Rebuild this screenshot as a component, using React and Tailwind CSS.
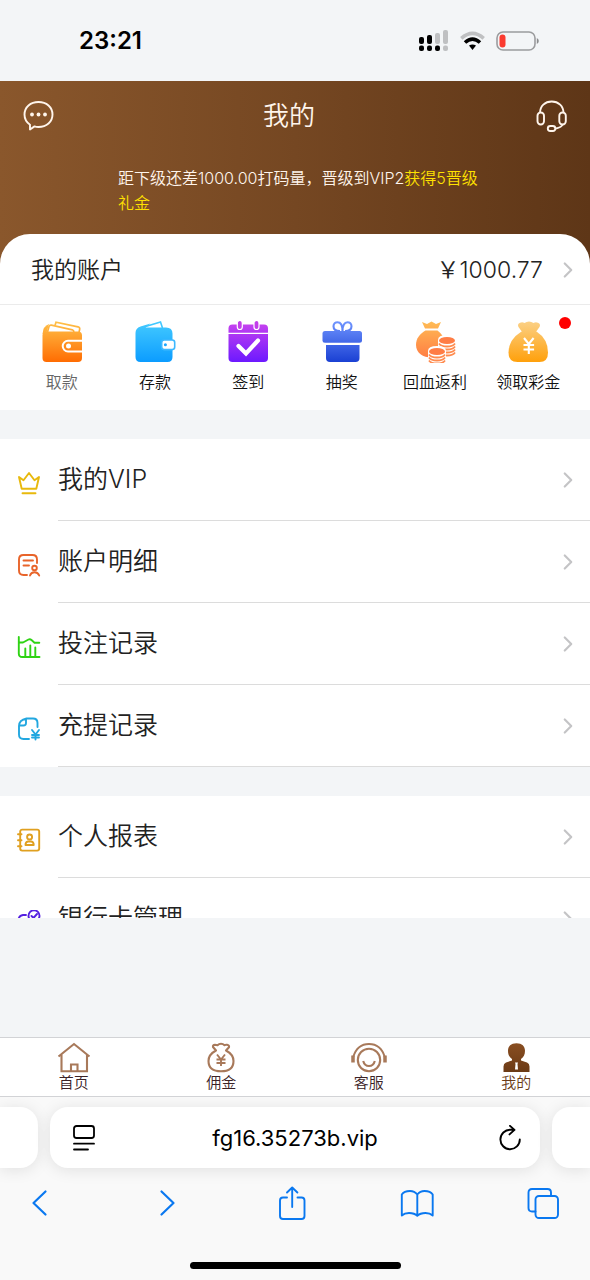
import { ChevronRight } from 'lucide-react'

const shortcuts = [
  { label: '取款', icon: WithdrawIcon, muted: true },
  { label: '存款', icon: DepositIcon },
  { label: '签到', icon: CheckInIcon },
  { label: '抽奖', icon: GiftIcon },
  { label: '回血返利', icon: RebateIcon },
  { label: '领取彩金', icon: BonusIcon, dot: true },
]

const menuGroups = [
  [
    { label: '我的VIP', icon: CrownIcon },
    { label: '账户明细', icon: DetailIcon },
    { label: '投注记录', icon: ChartIcon },
    { label: '充提记录', icon: RecordIcon },
  ],
  [
    { label: '个人报表', icon: ReportIcon },
    { label: '银行卡管理', icon: CardIcon },
  ],
]

const tabs = [
  { label: '首页', icon: HomeIcon },
  { label: '佣金', icon: CommissionIcon },
  { label: '客服', icon: ServiceIcon },
  { label: '我的', icon: MineIcon, active: true },
]

/* ---------- shortcut icons ---------- */

function Fade({ id, from, to }) {
  return (
    <defs>
      <linearGradient id={id} gradientUnits="userSpaceOnUse" x1="0" y1="0" x2="0" y2="42">
        <stop offset="0" stopColor={from} />
        <stop offset="1" stopColor={to} />
      </linearGradient>
    </defs>
  )
}

function WithdrawIcon() {
  return (
    <svg className="size-[42px]" viewBox="0 0 42 42" fill="none" aria-hidden>
      <Fade id="withdraw" from="#ffc24a" to="#ff6a00" />
      <path d="M14 4.5 15 1.2l22 4.6q2 .6 1.7 2.3l-.6 3" stroke="url(#withdraw)" strokeWidth="1.7" />
      <path d="M6.500 11 8 5.500q.6-1.600 2.400-1.300l21 4.600q1.600.5 1.400 2.200" stroke="url(#withdraw)" strokeWidth="1.7" />
      <path d="M1.500 13q.5-8 6.500-10L5.500 12Z" fill="url(#withdraw)" />
      <rect x="1.5" y="10.5" width="39.5" height="30.5" rx="4" fill="url(#withdraw)" />
      <path d="M41 19.8H27a5.3 5.3 0 0 0 0 10.6h14" stroke="#fff" strokeWidth="2" />
      <circle cx="27.5" cy="25.1" r="2.5" fill="#fff" />
    </svg>
  )
}

function DepositIcon() {
  return (
    <svg className="size-[42px]" viewBox="0 0 42 42" fill="none" aria-hidden>
      <Fade id="deposit" from="#45cbff" to="#0a9bff" />
      <path d="M5 7.5 26.5 1l2 6" stroke="url(#deposit)" strokeWidth="1.6" />
      <path d="M1.500 12q0-5 5-6.500l10-3-5 4H32q6.500 0 6.500 6V36q0 5-5 5H6.500q-5 0-5-5Z" fill="url(#deposit)" />
      <rect x="27.7" y="19" width="13" height="9.6" rx="2.500" fill="#fff" stroke="#3db8ff" strokeWidth="1.6" />
      <circle cx="31.4" cy="23.8" r="1.5" fill="#1aa5ff" />
    </svg>
  )
}

function CheckInIcon() {
  return (
    <svg className="size-[42px]" viewBox="0 0 42 42" fill="none" aria-hidden>
      <Fade id="checkin" from="#cc45ee" to="#6a18ff" />
      <rect x="1.5" y="3.5" width="39.5" height="37.5" rx="4" fill="url(#checkin)" />
      <path d="M1 12.4h40" stroke="#fff" strokeWidth="1.2" />
      <rect x="10.3" y="-.5" width="5" height="9" rx="2.5" fill="#c23eea" stroke="#fff" strokeWidth="1.2" />
      <rect x="27" y="-.5" width="5" height="9" rx="2.5" fill="#c23eea" stroke="#fff" strokeWidth="1.2" />
      <path d="m11.5 25 7.5 7.5L31 19.5" stroke="#fff" strokeWidth="4.2" strokeLinecap="round" />
    </svg>
  )
}

function GiftIcon() {
  return (
    <svg className="size-[42px]" viewBox="0 0 42 42" fill="none" aria-hidden>
      <Fade id="gift" from="#7095ff" to="#183ed2" />
      <path d="M19 10c-5 0-6.500-2-6.500-4.800 0-2.400 1.800-4 4-4 3 0 5 3 5 8.800 0-5.800 2-8.800 5-8.800 2.200 0 4 1.600 4 4 0 2.800-1.500 4.800-6.500 4.800" stroke="url(#gift)" strokeWidth="2.1" />
      <rect x="1.5" y="10" width="39.5" height="11.7" rx="2.5" fill="url(#gift)" />
      <path d="M5 24h33.500v13q0 4-4 4H9q-4 0-4-4Z" fill="url(#gift)" />
    </svg>
  )
}

function CoinStack({ x, y, coins }) {
  return (
    <g>
      <path d={`M${x - 1} ${y + 3}q0-5 9-5t9 5v${coins * 3}q0 5-9 5t-9-5Z`} fill="#fff" />
      <ellipse cx={x + 8} cy={y + 3.5} rx="8" ry="3.6" fill="#ff7d45" />
      {Array.from({ length: coins }, (_, i) => (
        <path key={i} d={`M${x} ${y + 6.5 + i * 3}q2 3 8 3t8-3`} stroke="#ff8b4e" strokeWidth="1.8" />
      ))}
    </g>
  )
}

function RebateIcon() {
  return (
    <svg className="size-[42px]" viewBox="0 0 42 42" fill="none" aria-hidden>
      <Fade id="rebate" from="#ffbd55" to="#ff7440" />
      <path d="m8 1 5 2 4.500-2.500L22 3l5-2-3 6.500H11Z" fill="url(#rebate)" />
      <path d="M11.5 9.500h12Q31 15 31 23c0 9-5 13.500-13.500 13.500S2 32 2 24c0-7 4-11 9.500-14.500Z" fill="url(#rebate)" />
      <CoinStack x={25} y={16} coins={4} />
      <CoinStack x={15} y={27} coins={3} />
    </svg>
  )
}

function BonusIcon() {
  return (
    <svg className="size-[42px]" viewBox="0 0 42 42" fill="none" aria-hidden>
      <Fade id="bonus" from="#fbd187" to="#ff9f08" />
      <path
        d="M15.500 11.500 11.500 6Q10 3 13 1.700q2.500-.8 4.500.3Q19.500.5 22 .5t4.500 1.500q2-1.100 4.500-.3 3 1.300 1.500 4.300l-4 5.500Z"
        fill="url(#bonus)"
      />
      <path d="M14.5 10.500h15Q41 18 41 31.500 41 41 32.500 41h-22Q1.500 41 1.500 31.500q0-13 13-21Z" fill="url(#bonus)" />
      <path d="m17 17 4.800 6 4.800-6M21.800 23v10M16.500 24h10.600M16.500 28.500h10.600" stroke="#fff" strokeWidth="2.1" />
    </svg>
  )
}

/* ---------- menu icons ---------- */

function LineIcon({ color, children }) {
  return (
    <svg
      className="size-6 shrink-0"
      viewBox="0 0 24 24"
      fill="none"
      stroke={color}
      strokeWidth="1.9"
      strokeLinecap="round"
      strokeLinejoin="round"
      aria-hidden
    >
      {children}
    </svg>
  )
}

function CrownIcon() {
  return (
    <LineIcon color="#e8b90c">
      <path d="M2 6 6.500 9.300 12 2l5.500 7.300L22 6l-2.700 11.800H4.700ZM5.500 22.200h13" />
    </LineIcon>
  )
}

function DetailIcon() {
  return (
    <LineIcon color="#e8642a">
      <path d="M20 10V6.500Q20 2 15.500 2h-9Q2 2 2 6.500v11Q2 22 6.500 22H10M6.500 7.500h9.500M6.500 12.500h5.500" />
      <circle cx="17.500" cy="15" r="2.300" />
      <path d="M13 22.500q1-3.200 4.500-3.200t4.700 3.200" />
    </LineIcon>
  )
}

function ChartIcon() {
  return (
    <LineIcon color="#2fd314">
      <path d="M1.800 2v16.500Q1.800 22 5.300 22H22.500M2 7.500h4l5.500-3q1.500-.8 3 .5l3 2.700h4.800M8.300 13.500V22M13.300 10.500V22M18.300 12.500V22" />
    </LineIcon>
  )
}

function RecordIcon() {
  return (
    <LineIcon color="#22a7e0">
      <path d="M20.500 10V6Q20.500 1.500 16 1.500H9.500Q2 3 2 9v8.500Q2 22 6.500 22H12M2.500 8.500h4q2.500 0 2.500-2.500V2M15 13l3.500 4.500L22 13M18.500 17.500v5M15 18h7M15 20.500h7" />
    </LineIcon>
  )
}

function ReportIcon() {
  return (
    <LineIcon color="#e0a020">
      <rect x="3.200" y="1.600" width="19" height="21" rx="2" />
      <path d="M1 6.300h3.500M1 12.300h3.500M1 18.300h3.500" />
      <circle cx="12.600" cy="9" r="2.500" />
      <path d="M10.800 13.500h3.600q2.300.5 2.300 3.500H8.500q0-3 2.300-3.500Z" />
    </LineIcon>
  )
}

function CardIcon() {
  return (
    <LineIcon color="#5420e0">
      <circle cx="17" cy="5.800" r="5.500" />
      <path d="m14.500 6 2 2 3.500-4M9 5H6Q2 5.500 1.500 9.500V19q0 3 3 3h14q3 0 3-3v-3" />
    </LineIcon>
  )
}

/* ---------- tab icons ---------- */

function TabSvg({ children }) {
  return (
    <svg className="h-8 w-9" viewBox="0 0 36 32" fill="none" stroke="#a8795a" strokeWidth="2.1" aria-hidden>
      {children}
    </svg>
  )
}

function HomeIcon() {
  return (
    <TabSvg>
      <path d="M2.500 14.500 18 2l15.500 12.500M5.500 12v17.300h25.500V12M15 29v-6.500h6.500V29" />
    </TabSvg>
  )
}

function CommissionIcon() {
  return (
    <TabSvg>
      <path
        d="M13 8.500 10 5q-.5-2 2-2.200 1.500 0 2.500.4 1.500-1.400 3.500-1.400t3.500 1.400q1-.6 2.500-.4 2.500.6 2 2.400l-3 3.300q7.500 4 7.500 10.500 0 10.300-12.500 10.300T5.500 19q0-6.500 7.500-10.500Z"
        strokeLinejoin="round"
      />
      <path d="m14 12.500 4 5 4-5M18 17.500V24M13.500 17.500h9M13.500 21h9" strokeWidth="1.900" />
    </TabSvg>
  )
}

function ServiceIcon() {
  return (
    <TabSvg>
      <circle cx="18" cy="18" r="11.200" />
      <path d="M12.200 19q1.300 5 5.800 5t5.800-5" />
      <path d="M2.200 15C5 6 11 2 18 2s13 4 15.800 13" strokeWidth="1.900" />
      <path d="M2 13.500v7M34 13.500v7" strokeWidth="3.500" />
    </TabSvg>
  )
}

function MineIcon() {
  return (
    <svg className="h-8 w-9" viewBox="0 0 36 32" aria-hidden>
      <Fade id="mine" from="#8a4f22" to="#5f3210" />
      <path
        d="M18.500 1.300c5.500 0 8.500 3 8.500 7.500 0 4-1.500 6.700-4 8.200v1.500l6 2q2.500 1 2.500 4v5.500H5.500v-5.500q0-3 2.500-4l6-2V17c-2.500-1.500-4-4.200-4-8.200 0-4.500 3-7.500 8.500-7.500Z"
        fill="url(#mine)"
      />
      <path d="M17 20.500h3l-.5 1.500.5 5.500h-3l.5-5.500Z" fill="#fff" />
    </svg>
  )
}

/* ---------- sections ---------- */

function StatusBar() {
  return (
    <div className="flex h-[81px] shrink-0 items-center justify-between pr-[51px] pl-[79px] text-black">
      <time className="text-2xl font-semibold">23:21</time>
      <div className="flex items-center gap-[11px]">
        <svg className="h-[22px] w-[31px]" viewBox="0 0 31 22" aria-hidden>
          <g fill="#bfc0c2">
            <rect x="17" y="3" width="5" height="11" rx="2" />
            <rect x="25" y="0" width="5" height="14" rx="2" />
            <rect x="25" y="15.5" width="5" height="5.5" rx="2" />
          </g>
          <rect x="1" y="7" width="5" height="7" rx="2" />
          <rect x="9" y="5" width="5" height="9" rx="2" />
          <rect x="1" y="15.5" width="5" height="5.5" rx="2" />
          <rect x="9" y="15.5" width="5" height="5.5" rx="2" />
          <rect x="17" y="15.5" width="5" height="5.5" rx="2" />
        </svg>
        <svg className="h-5 w-[25px]" viewBox="0 0 25 20" fill="none" strokeWidth="3.6" aria-hidden>
          <path d="M1.300 7.300q11.200-10 22.400 0" stroke="#bfc0c2" />
          <path d="M5 11.500q7.500-6.800 15 0" stroke="#000" />
          <path d="M9 14.500q3.500-2.200 7 0L12.500 19Z" fill="#000" />
        </svg>
        <svg className="h-5 w-[43px]" viewBox="0 0 43 20" aria-hidden>
          <rect x="1" y="1" width="38" height="18" rx="6" fill="none" stroke="#9b9c9e" strokeWidth="1.6" />
          <rect x="3.5" y="3.5" width="6" height="13" rx="3" fill="#fb3b30" />
          <path d="M40.800 7q2 1 2 3t-2 3Z" fill="#8b8c8e" />
        </svg>
      </div>
    </div>
  )
}

function Header() {
  return (
    <header className="text-[#fff5ec]">
      <div className="flex h-[70px] items-center px-[23px]">
        <button type="button" aria-label="消息">
          <svg className="h-8 w-[31px]" viewBox="0 0 31 32" fill="none" stroke="currentColor" strokeWidth="1.9" aria-hidden>
            <path d="M7 24.700Q1.500 21 1.500 14.500C1.500 7 7.500 2 15.500 2s14 5 14 12.500-6 12.500-14 12.500q-2.500 0-4-.6L7 29.500Z" strokeLinejoin="round" />
            <g fill="currentColor" stroke="none">
              <circle cx="9" cy="14.5" r="1.9" />
              <circle cx="15.5" cy="14.5" r="1.9" />
              <circle cx="22" cy="14.5" r="1.9" />
            </g>
          </svg>
        </button>
        <h1 className="flex-1 pr-3 text-center text-[26px]/9 font-[350]">我的</h1>
        <button type="button" aria-label="在线客服">
          <svg className="h-8 w-[31px]" viewBox="0 0 31 32" fill="none" stroke="currentColor" strokeWidth="1.9" aria-hidden>
            <path d="M4 13C4 6 9 1.500 15.700 1.500S27.500 6 27.500 13M27 24q-1.500 3.500-7 4.500" />
            <rect x="1.5" y="12.5" width="6.5" height="12" rx="3.2" />
            <rect x="23.3" y="12.5" width="6.5" height="12" rx="3.2" />
            <rect x="11.8" y="26" width="7.5" height="5" rx="2.5" />
          </svg>
        </button>
      </div>
      <p className="mt-[15px] mb-[18px] pr-[102px] pl-[118px] text-base/[25px] font-[350]">
        距下级还差1000.00打码量，晋级到VIP2
        <span className="text-[#ffe100]">获得5晋级礼金</span>
      </p>
    </header>
  )
}

function AccountCard() {
  return (
    <section className="rounded-t-[30px] bg-white">
      <a href="#account" className="flex h-[71px] items-center border-b border-[#ebebeb] pt-0.5 pr-[9px] pl-[31px] text-[23px] font-[350] text-[#222]">
        <span className="flex-1">我的账户</span>
        <span>￥1000.77</span>
        <ChevronRight className="ml-3 size-[26px] text-[#c4c4c6]" aria-hidden />
      </a>
      <div className="grid h-[105px] grid-cols-6 px-[15px] pt-4">
        {shortcuts.map(({ label, icon: Icon, muted, dot }) => (
          <button key={label} type="button" className="relative flex flex-col items-center gap-[7px]">
            <Icon />
            <span
              className={`text-base/6 font-[350] whitespace-nowrap ${muted ? 'text-[#666]' : 'text-[#111]'}`}
            >
              {label}
            </span>
            {dot && <span className="absolute -top-1 right-1 size-3 rounded-full bg-[#f00]" />}
          </button>
        ))}
      </div>
    </section>
  )
}

function MenuGroup({ items }) {
  return (
    <ul className="mt-[29px] bg-white">
      {items.map(({ label, icon: Icon }) => (
        <li key={label}>
          <a href="#menu" className="flex h-[82px] items-center gap-[17px] pl-[17px]">
            <span className="pt-1.5">
              <Icon />
            </span>
            <span className="flex h-full flex-1 items-center justify-between border-b border-[#dcdcdc] pr-[9px] text-[25px] font-[350] text-[#222]">
              {label}
              <ChevronRight className="size-[26px] text-[#c4c4c6]" aria-hidden />
            </span>
          </a>
        </li>
      ))}
    </ul>
  )
}

function TabBar() {
  return (
    <nav className="grid h-[60px] shrink-0 grid-cols-4 border-y border-[#d2d3d6] bg-white">
      {tabs.map(({ label, icon: Icon, active }) => (
        <a key={label} href="#tab" className="flex flex-col items-center pt-1">
          <Icon />
          <span className={`text-[15px]/[18px] font-[350] ${active ? 'text-[#6b3c17]' : 'text-[#3a2226]'}`}>
            {label}
          </span>
        </a>
      ))}
    </nav>
  )
}

function ToolButton({ label, children }) {
  return (
    <button type="button" aria-label={label}>
      <svg
        className="size-[34px]"
        viewBox="0 0 34 34"
        fill="none"
        stroke="currentColor"
        strokeWidth="1.9"
        strokeLinecap="round"
        strokeLinejoin="round"
        aria-hidden
      >
        {children}
      </svg>
    </button>
  )
}

function BrowserBar() {
  return (
    <footer className="shrink-0 overflow-hidden bg-[#f9f9f9] pt-[10px] pb-[11px]">
      <div className="flex h-[61px] gap-3">
        <div className="w-[38px] rounded-r-[18px] bg-white shadow-[0_2px_16px_rgba(0,0,0,0.1)]" />
        <div className="flex flex-1 items-center rounded-[18px] bg-white pr-[15px] pl-[19px] text-black shadow-[0_2px_16px_rgba(0,0,0,0.1)]">
          <button type="button" aria-label="页面设置">
            <svg className="h-[26px] w-[30px]" viewBox="0 0 30 26" fill="none" stroke="currentColor" strokeWidth="1.8" strokeLinecap="round" aria-hidden>
              <rect x="5" y="1" width="20" height="12" rx="2.5" />
              <path d="M5 18.700h20M5 24.500h14" />
            </svg>
          </button>
          <span className="flex-1 pt-0.5 pr-1 text-center text-[22px]">fg16.35273b.vip</span>
          <button type="button" aria-label="刷新">
            <svg className="h-[26px] w-[30px]" viewBox="0 0 30 26" fill="none" stroke="currentColor" strokeWidth="1.9" strokeLinecap="round" strokeLinejoin="round" aria-hidden>
              <path d="M24.800 14.500A9.700 9.700 0 1 1 15.300 4.800h4M15 .9l4.500 4-5 4.500" />
            </svg>
          </button>
        </div>
        <div className="w-[38px] rounded-l-[18px] bg-white shadow-[0_2px_16px_rgba(0,0,0,0.1)]" />
      </div>
      <div className="mt-[18px] flex items-center justify-between pr-[30px] pl-[23px] text-[#0a78f0]">
        <ToolButton label="后退">
          <path d="M22.500 5.500 10.500 17l12 11.500" strokeWidth="2.200" />
        </ToolButton>
        <ToolButton label="前进">
          <path d="m12.500 5.500 12 11.500-12 11.500" strokeWidth="2.200" />
        </ToolButton>
        <ToolButton label="分享">
          <path d="M12 11.500H8Q5 11.500 5 14.500V30q0 3 3 3h18.500q3 0 3-3V14.500q0-3-3-3h-4M17.200 21V1.500M12 6.500l5.200-5 5.200 5" />
        </ToolButton>
        <ToolButton label="书签">
          <path d="M17.300 8.500Q14.500 5 10 5 4 5 1.800 8.500v21Q4.500 27 9 27q5.500 0 8.300 2.800Q20 27 25.500 27q4.500 0 7.200 2.500v-21Q30.500 5 24.500 5q-4.500 0-7.200 3.500v21" />
        </ToolButton>
        <ToolButton label="标签页">
          <path d="M9.500 25.500H6q-3.500 0-3.500-3.500V6.500Q2.500 3 6 3h15.500Q25 3 25 6.500V10" />
          <rect x="9.5" y="10" width="22.5" height="22" rx="3.5" />
        </ToolButton>
      </div>
      <div className="mx-auto mt-[42px] h-[7px] w-[211px] rounded-full bg-black" />
    </footer>
  )
}

export default function App() {
  return (
    <div className="flex h-screen flex-col bg-[#f3f5f7] font-[Inter,'Noto_Sans_CJK_SC',sans-serif]">
      <StatusBar />
      <main className="mb-[119px] min-h-0 flex-1 overflow-hidden">
        <div className="bg-linear-to-r from-[#8a572c] via-[#754722] to-[#5e3617]">
          <Header />
          <AccountCard />
        </div>
        {menuGroups.map((items) => (
          <MenuGroup key={items[0].label} items={items} />
        ))}
      </main>
      <TabBar />
      <BrowserBar />
    </div>
  )
}
